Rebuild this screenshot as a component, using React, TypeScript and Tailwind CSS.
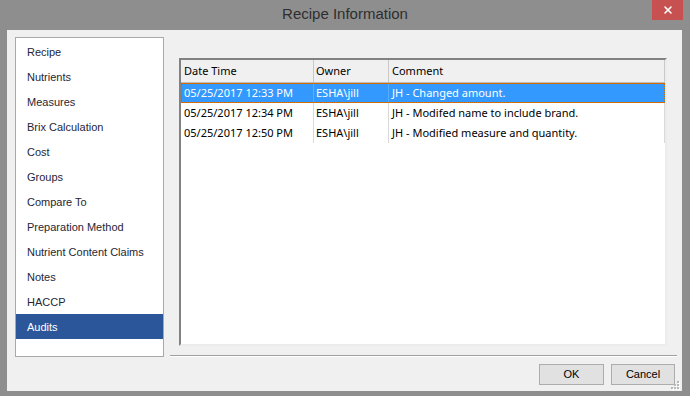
import { X } from 'lucide-react';

const navItems = [
  'Recipe',
  'Nutrients',
  'Measures',
  'Brix Calculation',
  'Cost',
  'Groups',
  'Compare To',
  'Preparation Method',
  'Nutrient Content Claims',
  'Notes',
  'HACCP',
  'Audits',
];

const audits = [
  { when: '05/25/2017 12:33 PM', owner: 'ESHA\\jill', comment: 'JH - Changed amount.' },
  { when: '05/25/2017 12:34 PM', owner: 'ESHA\\jill', comment: 'JH - Modifed name to include brand.' },
  { when: '05/25/2017 12:50 PM', owner: 'ESHA\\jill', comment: 'JH - Modified measure and quantity.' },
];

export default function App() {
  return (
    <div className="w-[690px] h-[396px] bg-[#8e8e8e] flex flex-col font-['Liberation_Sans',Arial,sans-serif] select-none">
      {/* title bar */}
      <div className="h-[30px] flex items-start">
        <div className="w-[38px] shrink-0" />
        <div className="flex-1 h-[30px] flex items-center justify-center text-[15px] text-[#2e2e2e] pb-[1px]">
          Recipe Information
        </div>
        <button className="w-[31px] h-[20px] mr-[7px] bg-[#c75050] flex items-center justify-center text-white">
          <X size={12} strokeWidth={3.2} />
        </button>
      </div>

      {/* client area */}
      <div className="relative ml-[7px] mr-[8px] h-[361px] bg-[#f0f0f0] flex flex-col">
        <div className="flex pt-[7px] pl-[8px]">
          <RecipeNav active="Audits" />

          <div className="ml-[6px] w-[507px] flex flex-col">
            <AuditTable />
            <div className="mt-[9px] h-[2px] border-t border-[#a0a0a0] border-b border-b-white" />
          </div>
        </div>

        <div className="mt-[7px] pr-[7px] flex justify-end gap-[7px]">
          <DialogButton label="OK" width="w-[65px]" />
          <DialogButton label="Cancel" width="w-[64px]" />
        </div>

        <SizeGrip />
      </div>
    </div>
  );
}

function RecipeNav({ active }: { active: string }) {
  return (
    <div className="w-[149px] h-[320px] bg-white border border-[#a9a9a9] pt-[1px]">
      {navItems.map((item) => (
        <div
          key={item}
          className={
            item === active
              ? 'h-[25px] flex items-center pl-[11px] pt-[2px] text-[11px] bg-[#2b579a] text-white'
              : 'h-[25px] flex items-center pl-[11px] pt-[2px] text-[11px] text-[#262636]'
          }
        >
          {item}
        </div>
      ))}
    </div>
  );
}

function AuditTable() {
  return (
    <div className="ml-[9px] mt-[21px] w-[488px] h-[288px] bg-white border-2 border-t-[#828282] border-l-[#828282] border-r-[#ececec] border-b-[#ececec] font-['Noto_Sans',sans-serif] text-[11px] text-black">
      <div className="flex h-[23px] bg-[#f0f0f0] border-b border-[#bdbdbd]">
        <div className="w-[133px] flex items-center pl-[3px] border-r border-[#c8c8c8]">Date Time</div>
        <div className="w-[75px] flex items-center pl-[2px] border-r border-[#c8c8c8]">Owner</div>
        <div className="w-[276px] flex items-center pl-[3px] border-r border-[#c8c8c8]">Comment</div>
      </div>
      {audits.map((a, i) =>
        i === 0 ? (
          <div key={i} className="flex h-[20px] bg-[#3399ff] text-white border border-dotted border-[#cc6600]">
            <div className="w-[132px] flex items-center pl-[2px] border-r border-[#5aaeff]">{a.when}</div>
            <div className="w-[75px] flex items-center pl-[2px] border-r border-[#5aaeff]">{a.owner}</div>
            <div className="w-[275px] flex items-center pl-[3px]">{a.comment}</div>
          </div>
        ) : (
          <div key={i} className="flex h-[20px]">
            <div className="w-[133px] flex items-center pl-[3px] border-r border-[#d9d9d9]">{a.when}</div>
            <div className="w-[75px] flex items-center pl-[2px] border-r border-[#d9d9d9]">{a.owner}</div>
            <div className="w-[276px] flex items-center pl-[3px] border-r border-[#d9d9d9]">{a.comment}</div>
          </div>
        ),
      )}
    </div>
  );
}

function DialogButton({ label, width }: { label: string; width: string }) {
  return (
    <button
      className={`${width} h-[21px] bg-[#e1e1e1] border border-[#adadad] text-[11px] text-black flex items-center justify-center`}
    >
      {label}
    </button>
  );
}

function SizeGrip() {
  const dots = [
    [6, 0],
    [6, 3],
    [3, 3],
    [6, 6],
    [3, 6],
    [0, 6],
  ];
  return (
    <svg className="absolute right-[2px] bottom-[1px]" width="9" height="9" viewBox="0 0 9 9">
      {dots.map(([x, y], i) => (
        <g key={i}>
          <rect x={x + 1} y={y + 1} width="2" height="2" fill="#ffffff" />
          <rect x={x} y={y} width="2" height="2" fill="#b8b8b8" />
        </g>
      ))}
    </svg>
  );
}
